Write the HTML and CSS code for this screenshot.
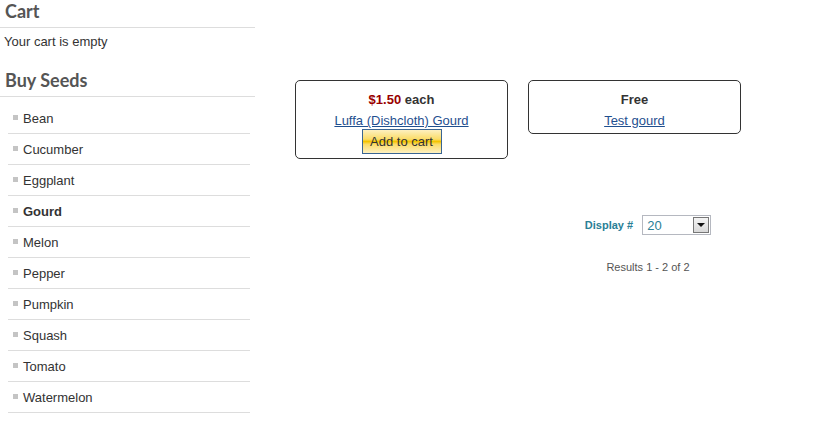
FILE: index.html
```html
<!DOCTYPE html>
<html lang="en">
<head>
    <meta charset="UTF-8">
    <title>Gourd - Buy Seeds</title>
    <link rel="stylesheet" href="styles.css">
</head>
<body>
    <div class="page">
        <div class="sidebar">
            <h3>Cart</h3>
            <p class="cart-empty">Your cart is empty</p>

            <h3>Buy Seeds</h3>
            <ul class="menu">
                <li><a href="#">Bean</a></li>
                <li><a href="#">Cucumber</a></li>
                <li><a href="#">Eggplant</a></li>
                <li class="active"><a href="#">Gourd</a></li>
                <li><a href="#">Melon</a></li>
                <li><a href="#">Pepper</a></li>
                <li><a href="#">Pumpkin</a></li>
                <li><a href="#">Squash</a></li>
                <li><a href="#">Tomato</a></li>
                <li><a href="#">Watermelon</a></li>
            </ul>
        </div>

        <div class="main">
            <div class="products">
                <div class="product">
                    <div class="price"><span class="amount">$1.50</span> each</div>
                    <a class="name" href="#">Luffa (Dishcloth) Gourd</a>
                    <button class="add">Add to cart</button>
                </div>
                <div class="product">
                    <div class="price">Free</div>
                    <a class="name" href="#">Test gourd</a>
                </div>
            </div>

            <div class="pagination">
                <div class="limit">
                    <label>Display #</label>
                    <span class="select">
                        <span class="value">20</span>
                        <span class="arrow"></span>
                    </span>
                </div>
                <p class="counter">Results 1 - 2 of 2</p>
            </div>
        </div>
    </div>
</body>
</html>
```

FILE: styles.css
```css
body { margin: 0; font-family: "Liberation Sans", Arial, sans-serif; font-size: 13px; color: #333; background: #fff; }
.page { display: flex; }

.sidebar { width: 255px; flex-shrink: 0; }
.sidebar h3 { margin: 0; padding: 0 0 4px 5px; font-family: Lato, sans-serif; font-weight: 700; font-size: 18px; line-height: 23px; color: #555; border-bottom: 1px solid #ddd; }
.cart-empty { margin: 5px 0 19px 4px; line-height: 17px; color: #333; }

.menu { list-style: none; margin: 6px 5px 0 8px; padding: 0; }
.menu li { height: 30px; border-bottom: 1px solid #ddd; display: flex; align-items: center; }
.menu li::before { content: ""; width: 5px; height: 5px; background: #c4c4c4; margin: 0 5px 2px 5px; }
.menu a { color: #333; text-decoration: none; }
.menu li.active a { font-weight: bold; }

.main { flex: 1; padding: 80px 0 0 40px; }
.products { display: flex; gap: 20px; align-items: flex-start; }
.product { width: 211px; border: 1px solid #333; border-radius: 5px; text-align: center; padding: 11px 0 4px; }
.price { font-weight: bold; line-height: 16px; color: #333; }
.price .amount { color: #990000; }
.name { display: block; margin-top: 5px; line-height: 16px; color: #1f4f8f; text-decoration: underline; }
.add { display: block; margin: 0 auto; width: 80px; height: 25px; padding: 0; font-family: "Liberation Sans", Arial, sans-serif; font-size: 13px; color: #333; border: 1px solid #3a6592; background: linear-gradient(#fdf0c0, #fbdc68 40%, #f4c400 50%, #fbdc68 62%, #fdf0c0); }

.pagination { width: 330px; margin: 56px 0 0 188px; text-align: center; }
.limit { display: flex; justify-content: center; align-items: center; gap: 9px; }
.limit label { font-size: 11px; font-weight: bold; color: #2a8096; }
.select { display: flex; align-items: center; justify-content: space-between; width: 63px; height: 18px; border: 1px solid #b5b8c0; padding-left: 4px; box-sizing: content-box; }
.select .value { font-size: 13px; color: #2a8096; }
.select .arrow { width: 14px; height: 14px; margin-right: 1px; border: 1px solid #777; background: linear-gradient(#f4f4f4, #d8d8d8); position: relative; }
.select .arrow::after { content: ""; position: absolute; left: 3px; top: 5px; border-left: 4px solid transparent; border-right: 4px solid transparent; border-top: 4px solid #111; }
.counter { margin: 26px 0 0; font-size: 11px; color: #555; }
```
